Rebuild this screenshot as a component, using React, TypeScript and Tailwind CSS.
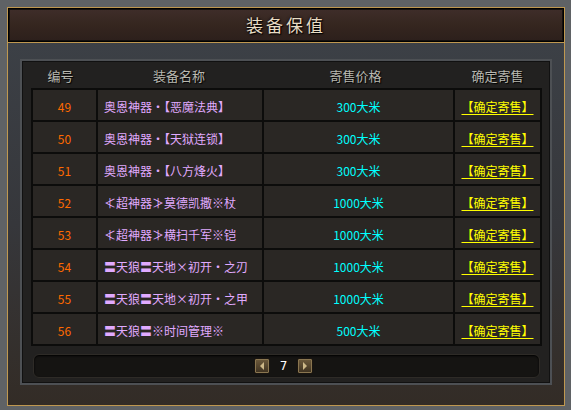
const rows = [
  { id: 49, name: "奥恩神器・【恶魔法典】", price: "300大米" },
  { id: 50, name: "奥恩神器・【天狱连锁】", price: "300大米" },
  { id: 51, name: "奥恩神器・【八方烽火】", price: "300大米" },
  { id: 52, name: "≮超神器≯莫德凯撒※杖", price: "1000大米" },
  { id: 53, name: "≮超神器≯横扫千军※铠", price: "1000大米" },
  { id: 54, name: "〓天狼〓天地×初开・之刃", price: "1000大米" },
  { id: 55, name: "〓天狼〓天地×初开・之甲", price: "1000大米" },
  { id: 56, name: "〓天狼〓※时间管理※", price: "500大米" },
];

const font = "font-['Noto_Sans_CJK_SC',sans-serif]";

function PageButton({ dir }: { dir: "left" | "right" }) {
  return (
    <button className="w-4 h-4 rounded-[2px] border border-[#1a1510] bg-gradient-to-b from-[#6e5b3c] to-[#3d3120] shadow-[inset_0_0_0_1px_#8a7650] flex items-center justify-center">
      <svg width="6" height="8" viewBox="0 0 6 8">
        {dir === "left" ? (
          <polygon points="5,0 5,8 1,4" fill="#cdb888" />
        ) : (
          <polygon points="1,0 1,8 5,4" fill="#cdb888" />
        )}
      </svg>
    </button>
  );
}

export default function App() {
  return (
    <div className={`w-[571px] h-[410px] bg-[#5f6265] pt-[7px] pl-[7px] pr-[6px] pb-[4px] ${font}`}>
      <div className="h-full flex flex-col border border-[#bf9850] bg-[#3a3d42]">
        {/* Title */}
        <div className="h-[35px] border-b border-[#bf9850] bg-black p-[1px]">
          <div className="h-full border border-[#14100e] bg-gradient-to-b from-[#3e2d29] via-[#35261f] to-[#2d201c] flex items-center justify-center">
            <span className="text-[17px] tracking-[3px] text-[#e8dcc4] [text-shadow:1px_1px_1px_#000,0_0_3px_#000]">
              装备保值
            </span>
          </div>
        </div>

        {/* Panel */}
        <div className="flex-1 bg-gradient-to-b from-[#3c4046] via-[#36373b] to-[#332c26] pt-[16px] pl-[12px] pr-[12px] pb-[20px]">
          <div className="h-full border-2 border-[#4d5054] bg-[#222120] shadow-[inset_0_0_0_1px_#111] flex flex-col pl-[9px] pr-[8px]">
            {/* Header */}
            <div className="h-[27px] pt-[3px] grid grid-cols-[65px_166px_191px_89px] items-center text-[13px] text-[#b8b8b0] [text-shadow:1px_1px_1px_#000]">
              <div className="text-center pr-[6px]">编号</div>
              <div className="text-center">装备名称</div>
              <div className="text-center pr-[4px]">寄售价格</div>
              <div className="text-center">确定寄售</div>
            </div>

            {/* Table */}
            <div className="grid grid-cols-[63px_164px_189px_85px] gap-[2px] p-[2px] bg-[#0c0c0b] text-[12px] leading-none">
              {rows.map((r) => (
                <div key={r.id} className="contents">
                  <div className="h-[30px] pt-[3px] bg-[#2a2724] flex items-center justify-center text-[#ff6a00]">
                    {r.id}
                  </div>
                  <div className="h-[30px] pt-[3px] bg-[#2a2724] flex items-center pl-[6px] text-[#e0aaff]">
                    {r.name}
                  </div>
                  <div className="h-[30px] pt-[3px] bg-[#2a2724] flex items-center justify-center text-[#00ffff]">
                    {r.price}
                  </div>
                  <div className="h-[30px] pt-[3px] bg-[#2a2724] flex items-center justify-center">
                    <span className="text-[#ffff00] underline underline-offset-[2px] cursor-pointer">
                      【确定寄售】
                    </span>
                  </div>
                </div>
              ))}
            </div>

            {/* Pager */}
            <div className="mt-[8px] mx-[2px] h-[24px] rounded-[6px] border border-[#2e2b27] bg-[#151412] shadow-[inset_0_1px_2px_#000] flex items-center justify-center gap-[10px] pr-[6px]">
              <PageButton dir="left" />
              <span className="text-[12px] text-white font-['DejaVu_Sans',sans-serif]">7</span>
              <PageButton dir="right" />
            </div>
          </div>
        </div>
      </div>
    </div>
  );
}
